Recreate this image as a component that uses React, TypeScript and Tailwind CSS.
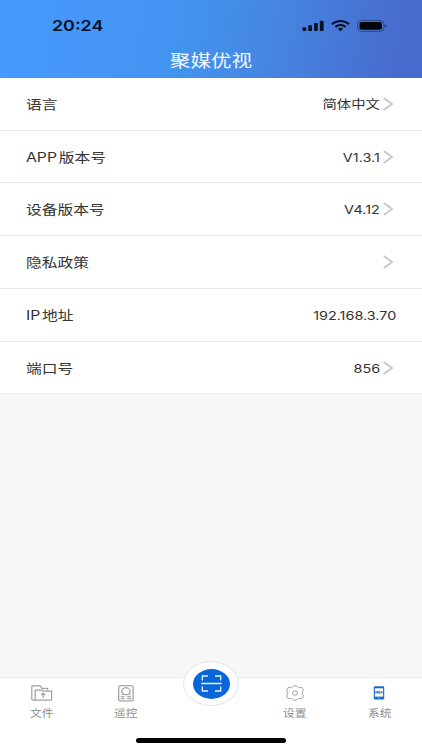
import React from "react";

const cjk = "font-['Inter','Noto_Sans_CJK_SC',sans-serif]";

type Row = { prefix?: string; label: string; value?: string; arrow?: boolean; height: string };

const rows: Row[] = [
  { label: "语言", value: "简体中文", arrow: true, height: "h-[53px]" },
  { prefix: "APP", label: "版本号", value: "V1.3.1", arrow: true, height: "h-[52px]" },
  { label: "设备版本号", value: "V4.12", arrow: true, height: "h-[53px]" },
  { label: "隐私政策", arrow: true, height: "h-[53px]" },
  { prefix: "IP", label: "地址", value: "192.168.3.70", height: "h-[53px]" },
  { label: "端口号", value: "856", arrow: true, height: "h-[52px]" },
];

function StatusIcons() {
  return (
    <svg className="absolute left-[302px] top-[19px]" width="86" height="14" viewBox="0 0 86 14">
      <g fill="#071227">
        <rect x="0.5" y="8.2" width="3.8" height="3.9" rx="0.9" />
        <rect x="6.2" y="6.2" width="3.8" height="5.9" rx="0.9" />
        <rect x="12" y="4" width="3.8" height="8.1" rx="0.9" />
        <rect x="17.8" y="1.8" width="3.8" height="10.3" rx="0.9" />
      </g>
      <g fill="none" stroke="#071227" strokeWidth="2">
        <path d="M30 5.3C34.7 0.9 42.3 0.9 47 5.3" />
        <path d="M33.3 8C36.2 5.3 40.8 5.3 43.7 8" />
      </g>
      <path d="M35.7 9.8C37.3 8.4 39.7 8.4 41.3 9.8L38.5 12.3Z" fill="#071227" />
      <rect x="55.6" y="1.4" width="26.4" height="11" rx="4" fill="none" stroke="#213c70" strokeWidth="0.8" />
      <rect x="57.5" y="3" width="22.5" height="7.8" rx="2.4" fill="#02060c" />
      <path d="M83.4 5.2C85.2 5.7 85.2 8.1 83.4 8.6Z" fill="#213c70" />
    </svg>
  );
}

function Arrow() {
  return (
    <svg className="ml-[3px] mr-[2px]" width="11" height="14" viewBox="0 0 11 14" fill="none" stroke="#c8c8c8" strokeWidth="1.9">
      <path d="M0.8 0.9L9 7L0.8 13.1" />
    </svg>
  );
}

function FolderIcon() {
  return (
    <svg width="22" height="16" viewBox="0 0 22 16" fill="none" stroke="#a0a0a0" strokeWidth="1.2">
      <path d="M4.2 15.1H1.6Q0.8 15.1 0.8 14.3V1.5Q0.8 0.8 1.6 0.8H9.2L10.8 3.3H16.6V5.3" />
      <path d="M4.2 15.1V5.1H10.8L12 6.1H20.6V14.4Q20.6 15.1 19.8 15.1Z" />
      <path d="M12.2 13V8.2M10 10L12.2 8.2L14.4 10" />
    </svg>
  );
}

function RemoteIcon() {
  return (
    <svg width="16" height="17" viewBox="0 0 16 17" fill="none" stroke="#929292" strokeWidth="1.1">
      <rect x="0.7" y="0.8" width="14.4" height="15.2" rx="1.4" />
      <ellipse cx="7.9" cy="6.3" rx="4.2" ry="3.5" />
      <path d="M4.5 9.4L3.5 10M11.3 9.4L12.3 10M2.7 11.7H6.5M9.3 11.7H13.1M2.7 13.8H6.5M9.3 13.8H13.1" />
    </svg>
  );
}

function GearIcon() {
  return (
    <svg width="18" height="16" viewBox="0 0 18 16" fill="none" stroke="#a3a3a3" strokeWidth="1" strokeLinejoin="round">
      <path d="M7.1 1.2Q9 0 10.9 1.2L12.1 2.4Q12.7 2.8 13.6 2.5L15 2.3Q17.3 3 17.3 5L16.4 7.1Q16.1 8 16.4 8.9L17.3 11Q17.3 13 15 13.7L13.6 13.5Q12.7 13.2 12.1 13.6L10.9 14.8Q9 16 7.1 14.8L5.9 13.6Q5.3 13.2 4.4 13.5L3 13.7Q0.7 13 0.7 11L1.6 8.9Q1.9 8 1.6 7.1L0.7 5Q0.7 3 3 2.3L4.4 2.5Q5.3 2.8 5.9 2.4Z" />
      <ellipse cx="9" cy="8" rx="2.6" ry="2.1" />
    </svg>
  );
}

function SystemIcon() {
  return (
    <svg width="12" height="14" viewBox="0 0 12 14">
      <rect x="0.8" y="0.3" width="10.4" height="13.2" rx="1.3" fill="#176bd0" />
      <rect x="1.9" y="2.3" width="8.2" height="8.3" fill="#fff" />
      <path d="M1 6.4H3M9 6.4H11" stroke="#176bd0" strokeWidth="0.8" />
      <path d="M3.2 5.1V7.4M3.2 6.2H4.6M4.7 5.1V7.4M5.7 5.2H7V7.3H5.7ZM8.3 5V7.6" fill="none" stroke="#315f9d" strokeWidth="0.8" />
      <circle cx="6" cy="12" r="0.6" fill="#fff" />
    </svg>
  );
}

function Tab({ icon, label }: { icon: React.ReactNode; label: string }) {
  return (
    <div className="flex flex-1 flex-col items-center">
      <div className="mr-px mt-[6px] flex h-[18px] items-center justify-center">{icon}</div>
      <span className="mr-px mt-[5px] scale-x-[1.2] text-[9.8px] leading-[14px] text-[#8d8d8d]">{label}</span>
    </div>
  );
}

export default function App() {
  return (
    <div className={`relative flex h-[750px] w-[422px] flex-col overflow-hidden bg-[#f7f7f7] ${cjk}`}>
      <header className="relative flex h-[78px] items-end justify-center bg-[linear-gradient(100deg,#4899ff_0%,#4293ef_45%,#4684e0_65%,#476bcc_95%)]">
        <span className="absolute left-[52px] top-[17px] origin-left scale-x-[1.19] text-[15px] font-semibold leading-[18px] text-[#071227]">20:24</span>
        <StatusIcons />
        <h1 className="mb-[5px] scale-x-[1.21] text-[17px] font-normal leading-6 text-[#f0f7ff]">聚媒优视</h1>
      </header>
      <main className="flex-1">
        {rows.map((row) => (
          <div key={row.label} className={`flex items-center justify-between border-b border-[#ebebeb] bg-white pl-[26px] pr-[26px] ${row.height}`}>
            <span className="origin-left scale-x-[1.21] text-[13px] leading-5 text-[#333]">
              {row.prefix && <span className="mr-[1.5px]">{row.prefix}</span>}
              {row.label}
            </span>
            <div className="flex items-center">
              {row.value && <span className="origin-right translate-y-px scale-x-[1.2] text-[12px] leading-5 text-[#333]">{row.value}</span>}
              {row.arrow && <Arrow />}
            </div>
          </div>
        ))}
      </main>
      <nav className="relative flex h-[73px] border-t border-[#ebebeb] bg-white">
        <Tab icon={<FolderIcon />} label="文件" />
        <Tab icon={<RemoteIcon />} label="遥控" />
        <div className="flex-1" />
        <Tab icon={<GearIcon />} label="设置" />
        <Tab icon={<SystemIcon />} label="系统" />
        <div className="absolute -top-[17px] left-[183px] flex h-[45px] w-[56px] items-center justify-center rounded-[50%] border border-[#e6e6ea] bg-white">
          <div className="flex h-[30px] w-[37px] items-center justify-center rounded-[50%] bg-[#0866d9]">
            <svg width="21" height="17" viewBox="0 0 21 17" fill="none" stroke="#e5f2ff" strokeWidth="1.3">
              <path d="M1.3 5.5V1H7M14 1H19.7V5.5M1.3 11.5V16H7M14 16H19.7V11.5M0.3 8.5H20.7" />
            </svg>
          </div>
        </div>
        <div className="absolute left-[136px] top-[60px] h-[5px] w-[150px] rounded-full bg-black" />
      </nav>
    </div>
  );
}
